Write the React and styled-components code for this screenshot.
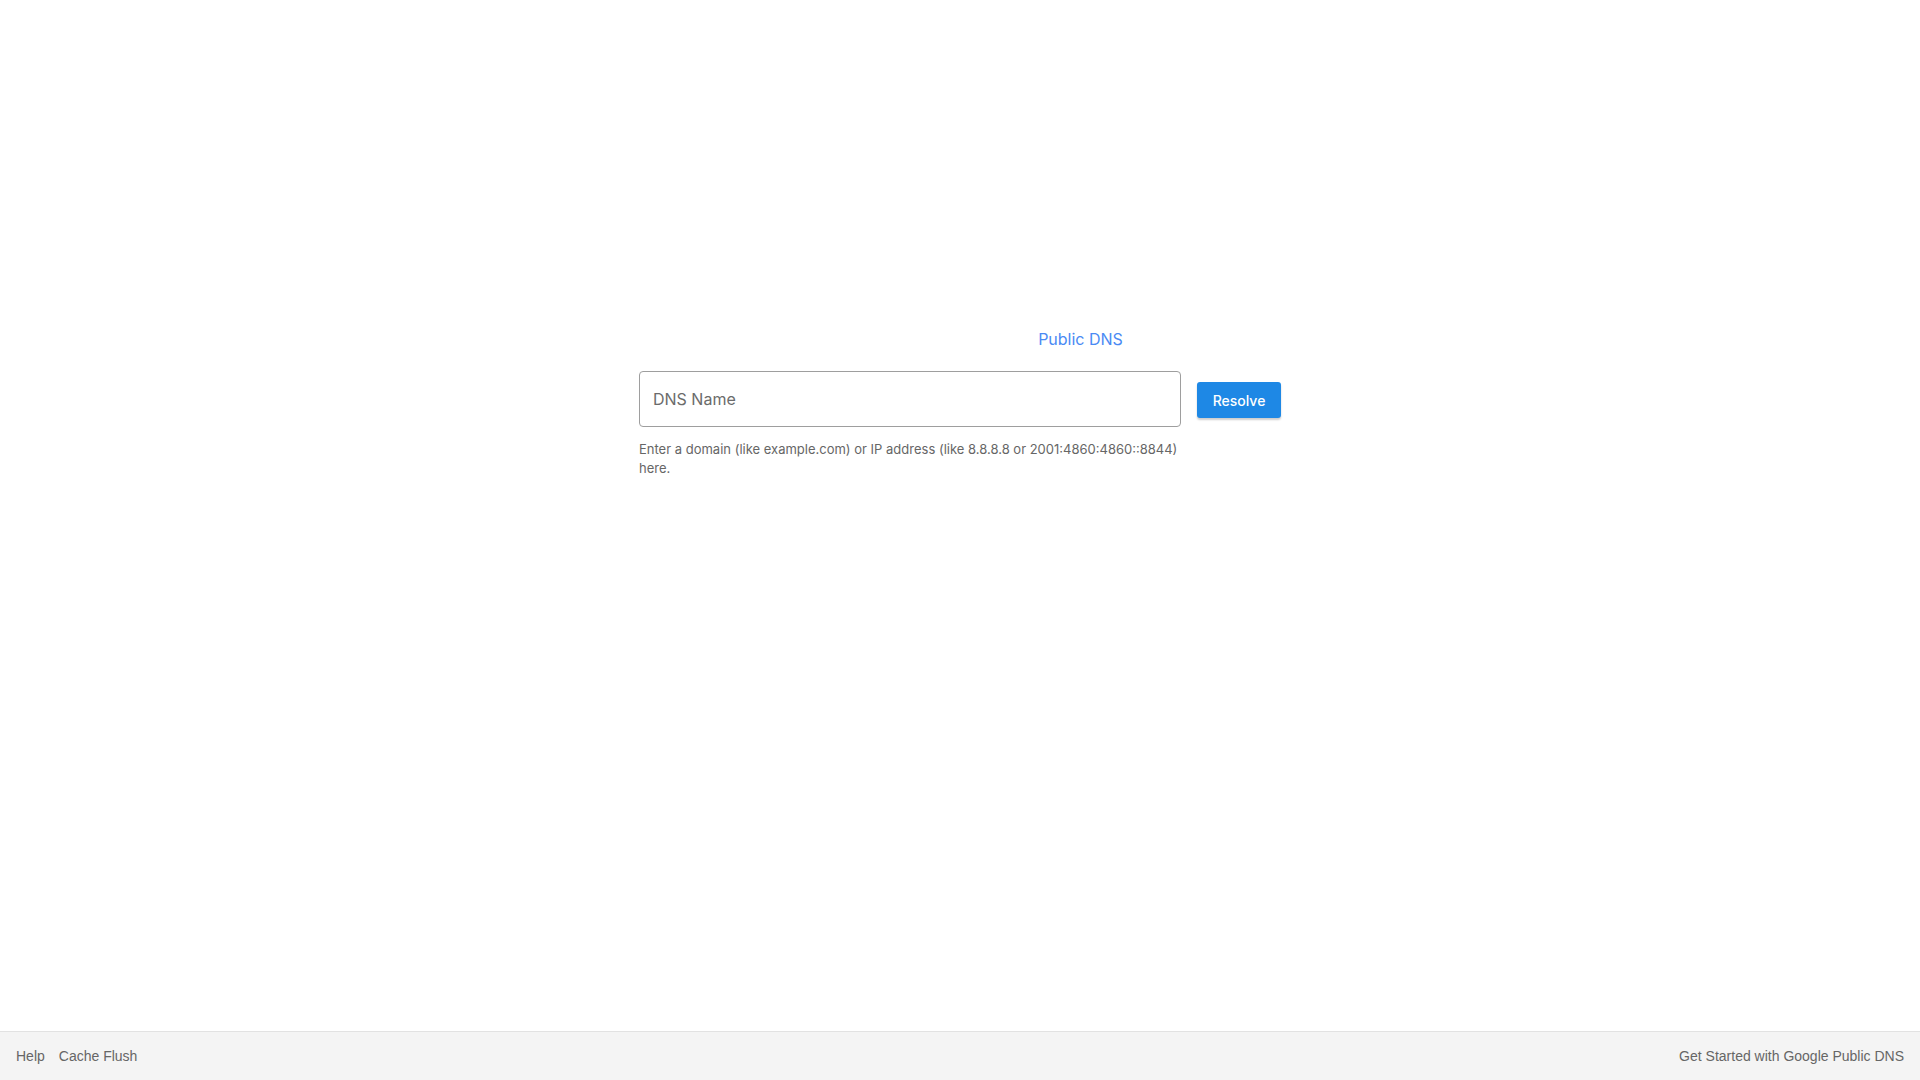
import styled, { createGlobalStyle } from "styled-components";

const GlobalStyle = createGlobalStyle`
  html, body {
    margin: 0;
    padding: 0;
    height: 100%;
    background: #fff;
  }
  #root {
    min-height: 100vh;
    display: flex;
    flex-direction: column;
  }
`;

export default function App() {
  return (
    <>
      <GlobalStyle />
      <Main>
        <Panel>
          <Brand>
            <LogoSlot aria-hidden="true" />
            <BrandName>Public DNS</BrandName>
          </Brand>
          <QueryRow>
            <Field>
              <NameInput type="text" placeholder="DNS Name" />
              <Hint>
                Enter a domain (like example.com) or IP address (like 8.8.8.8 or
                2001:4860:4860::8844) here.
              </Hint>
            </Field>
            <ResolveButton type="button">Resolve</ResolveButton>
          </QueryRow>
        </Panel>
      </Main>
      <Footer>
        <FooterLinks>
          <FooterLink href="#">Help</FooterLink>
          <FooterLink href="#">Cache Flush</FooterLink>
        </FooterLinks>
        <FooterLink href="#">Get Started with Google Public DNS</FooterLink>
      </Footer>
    </>
  );
}

const Main = styled.main`
  flex: 1;
  display: flex;
  justify-content: center;
  padding-top: 328px;
  font-family: Inter, "Noto Sans", sans-serif;
`;

const Panel = styled.div`
  width: 642px;
  display: flex;
  flex-direction: column;
`;

const Brand = styled.div`
  display: flex;
  justify-content: center;
  align-items: center;
  height: 22px;
  margin-bottom: 21px;
`;

// the logo image never loaded, it only keeps its space
const LogoSlot = styled.span`
  width: 233px;
  margin-right: 8px;
`;

const BrandName = styled.span`
  font-size: 16px;
  color: #4a8af4;
  line-height: 22px;
`;

const QueryRow = styled.div`
  display: flex;
  align-items: flex-start;
  gap: 16px;
`;

const Field = styled.div`
  width: 542px;
  display: flex;
  flex-direction: column;
`;

const NameInput = styled.input`
  box-sizing: border-box;
  width: 100%;
  height: 56px;
  padding: 0 13px;
  border: 1px solid #9e9e9e;
  border-radius: 4px;
  font-family: inherit;
  font-size: 16px;
  color: #333;
  outline: none;

  &::placeholder {
    color: #6b6b6b;
  }
`;

const Hint = styled.p`
  margin: 13px 0 0;
  font-size: 13px;
  line-height: 19px;
  color: #666;
`;

const ResolveButton = styled.button`
  margin-top: 11px;
  width: 84px;
  height: 36px;
  border: none;
  border-radius: 3px;
  background: #1e88e5;
  color: #fff;
  font-family: inherit;
  font-size: 14px;
  font-weight: 500;
  box-shadow: 0 2px 2px rgba(0, 0, 0, 0.2);
  cursor: pointer;
`;

const Footer = styled.footer`
  box-sizing: border-box;
  height: 49px;
  display: flex;
  align-items: center;
  justify-content: space-between;
  padding: 0 16px;
  border-top: 1px solid #e2e2e2;
  background: #f4f4f4;
  font-family: "Liberation Sans", Arial, sans-serif;
  font-size: 14px;
`;

const FooterLinks = styled.nav`
  display: flex;
  gap: 14px;
`;

const FooterLink = styled.a`
  color: #666;
  text-decoration: none;
`;
